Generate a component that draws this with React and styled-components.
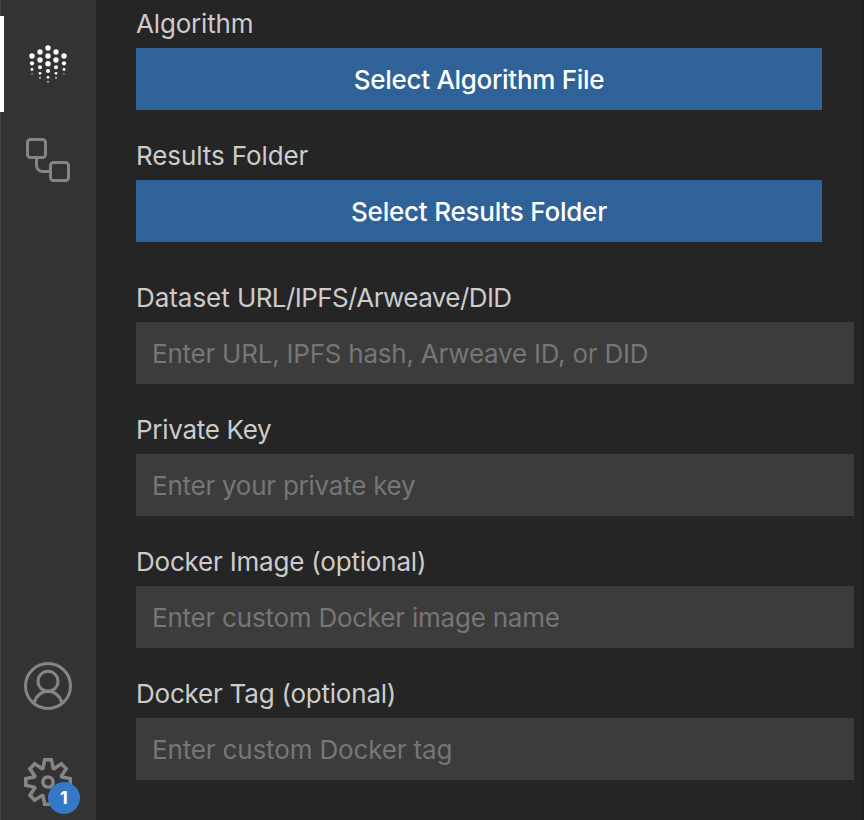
import React from "react";
import styled, { createGlobalStyle } from "styled-components";

const GlobalStyle = createGlobalStyle`
  * { box-sizing: border-box; }
  body { margin: 0; background: #252526; overflow: hidden; }
  body, button, input { font-family: Inter, "Liberation Sans", sans-serif; }
`;

const Window = styled.div`
  display: flex;
  width: 864px;
  height: 820px;
  background: #252526;
  border-right: 2px solid #1e1e1e;
  overflow: hidden;
`;

const ActivityBar = styled.nav`
  display: flex;
  flex-direction: column;
  justify-content: space-between;
  flex: 0 0 96px;
  padding: 16px 0 0;
  height: 830px;
  background: #333333;
  box-shadow: inset 1px 0 #444444;
`;

const Group = styled.div`
  display: flex;
  flex-direction: column;
`;

const Activity = styled.div`
  position: relative;
  display: flex;
  align-items: center;
  justify-content: center;
  width: 96px;
  height: 96px;
  color: ${(p) => (p.$active ? "#ffffff" : "#858585")};
  box-shadow: ${(p) => (p.$active ? "inset 4px 0 #ffffff" : "none")};
`;

const Icon = styled.svg`
  display: block;
  width: 48px;
  height: 48px;
`;

const Badge = styled.span`
  position: absolute;
  left: 48px;
  top: 48px;
  width: 32px;
  height: 32px;
  border-radius: 50%;
  background: #3478c6;
  color: #ffffff;
  font-size: 18px;
  font-weight: 700;
  line-height: 32px;
  text-align: center;
`;

const Form = styled.main`
  display: flex;
  flex-direction: column;
  flex: 1;
  padding: 8px 8px 0 40px;
`;

const Field = styled.div`
  display: flex;
  flex-direction: column;
  height: ${(p) => p.$height || 132}px;
`;

const Label = styled.label`
  height: 40px;
  line-height: 32px;
  color: #cccccc;
  font-size: 26px;
  font-weight: 430;
  letter-spacing: ${(p) => p.$spacing || 0}px;
  white-space: nowrap;
`;

const Tight = styled.span`
  letter-spacing: -0.57px;
`;

const Button = styled.button`
  width: 686px;
  height: 62px;
  padding: 0;
  border: 0;
  background: #2f6299;
  color: #ffffff;
  font-size: 26px;
  font-weight: 490;
  letter-spacing: ${(p) => p.$spacing || 0}px;
`;

const Input = styled.input`
  width: 718px;
  height: 62px;
  padding: 0 16px;
  border: 0;
  border-radius: 0;
  outline: 0;
  background: #3c3c3c;
  color: #cccccc;
  font-size: 26px;
  font-weight: 420;
  letter-spacing: ${(p) => p.$spacing || 0}px;
  &::placeholder { color: #767676; opacity: 1; }
`;

const dots = [
  [48, 48, 2.7], [40, 52, 2.7], [56, 52, 2.7],
  [32, 56, 2.7], [48, 56, 2.7], [64, 56, 2.7],
  [40, 60, 2.7], [56, 60, 2.7], [32, 63.3, 2.1], [48, 63.7, 2.7], [64, 63.3, 2.1],
  [40, 67.3, 2], [56, 67.3, 2], [32, 69.5, 1.45], [64, 69.5, 1.45],
  [48, 71, 2.1], [40, 73.3, 1.4], [56, 73.3, 1.4],
  [32, 73.8, 0.6], [64, 73.8, 0.6], [48, 77.3, 1.4],
  [40, 77.9, 0.8], [56, 77.9, 0.8], [48, 81.8, 0.8],
];

const OceanIcon = () => (
  <Icon viewBox="24 40 48 48" fill="currentColor">
    {dots.map(([x, y, r]) => <circle key={`${x}-${y}`} cx={x} cy={y} r={r} />)}
  </Icon>
);

const LinkedIcon = () => (
  <Icon viewBox="0 0 48 48" fill="none" stroke="currentColor" strokeWidth="3">
    <rect x="3.5" y="3.5" width="18" height="18" rx="3" />
    <rect x="26.5" y="26.5" width="18" height="18" rx="3" />
    <path d="M12.5 21.5v8a6 6 0 0 0 6 6h8" />
  </Icon>
);

const AccountIcon = () => (
  <Icon viewBox="0 0 48 48" fill="none" stroke="currentColor" strokeWidth="3">
    <circle cx="24" cy="24" r="22.5" />
    <circle cx="24" cy="19.3" r="10" />
    <path d="M10 41.2C11.8 33.8 17.4 29.3 24 29.3s12.2 4.5 14 11.9" />
  </Icon>
);

const GearIcon = () => (
  <Icon viewBox="0 0 24 24" fill="currentColor">
    <path fillRule="evenodd" d="M19.85 8.75l4.15.83v4.84l-4.15.83 2.35 3.52-3.43 3.43-3.52-2.35-.83 4.15H9.58l-.83-4.15-3.52 2.35-3.43-3.43 2.35-3.52L0 14.42V9.58l4.15-.83L1.8 5.23 5.23 1.8l3.52 2.35L9.58 0h4.84l.83 4.15 3.52-2.35 3.43 3.43-2.35 3.52zm-1.57 5.07l4-.81v-2l-4-.81-.54-1.3 2.29-3.43-1.43-1.43-3.43 2.29-1.3-.54-.81-4h-2l-.81 4-1.3.54-3.43-2.29-1.43 1.43L6.38 8.9l-.54 1.3-4 .81v2l4 .81.54 1.3-2.29 3.43 1.43 1.43 3.43-2.29 1.3.54.81 4h2l.81-4 1.3-.54 3.43 2.29 1.43-1.43-2.29-3.43.54-1.3zm-8.186-4.672A3.43 3.43 0 0 1 12 8.57 3.44 3.44 0 0 1 15.43 12a3.43 3.43 0 1 1-5.336-2.852zm.956 4.274c.281.188.612.288.95.288A1.7 1.7 0 0 0 13.71 12a1.71 1.71 0 1 0-2.66 1.422z" />
  </Icon>
);

export default function App() {
  return (
    <>
      <GlobalStyle />
      <Window>
        <ActivityBar>
          <Group>
            <Activity $active><OceanIcon /></Activity>
            <Activity><LinkedIcon /></Activity>
          </Group>
          <Group>
            <Activity><AccountIcon /></Activity>
            <Activity><GearIcon /><Badge>1</Badge></Activity>
          </Group>
        </ActivityBar>
        <Form>
          <Field>
            <Label $spacing={-0.17}>Algorithm</Label>
            <Button $spacing={-0.3}>Select Algorithm File</Button>
          </Field>
          <Field $height={142}>
            <Label $spacing={-0.1}>Results Folder</Label>
            <Button $spacing={-0.22}>Select Results Folder</Button>
          </Field>
          <Field>
            <Label $spacing={-0.05}>Dataset <Tight>URL/IPFS/Arweave/DID</Tight></Label>
            <Input $spacing={-0.23} placeholder="Enter URL, IPFS hash, Arweave ID, or DID" />
          </Field>
          <Field>
            <Label $spacing={-0.3}>Private Key</Label>
            <Input $spacing={-0.25} placeholder="Enter your private key" />
          </Field>
          <Field>
            <Label $spacing={-0.2}>Docker Image (optional)</Label>
            <Input $spacing={-0.23} placeholder="Enter custom Docker image name" />
          </Field>
          <Field>
            <Label $spacing={-0.22}>Docker Tag (optional)</Label>
            <Input $spacing={-0.15} placeholder="Enter custom Docker tag" />
          </Field>
        </Form>
      </Window>
    </>
  );
}
